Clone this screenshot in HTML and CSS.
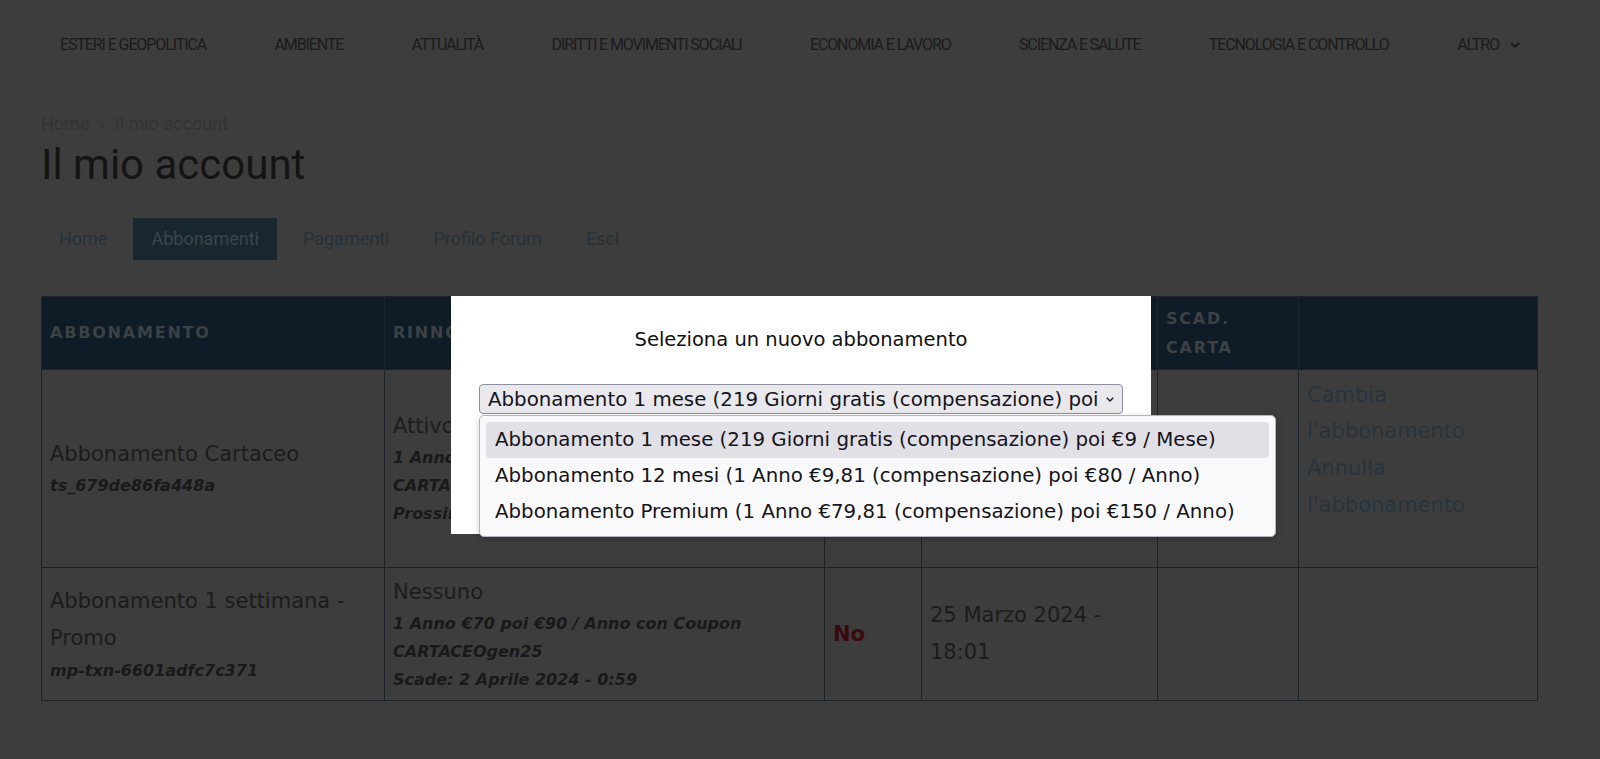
FILE: index.html
```html
<html>
	<head>
		<title>Il mio account</title>
		<link rel="stylesheet" href="styles.css">
	</head>
	<body>
		<header class="site-header">
			<nav class="main-nav">
				<a href="#">Esteri e geopolitica</a>
				<a href="#">Ambiente</a>
				<a href="#">Attualità</a>
				<a href="#">Diritti e movimenti sociali</a>
				<a href="#">Economia e lavoro</a>
				<a href="#">Scienza e salute</a>
				<a href="#">Tecnologia e controllo</a>
				<a href="#" class="more">Altro
					<svg width="10" height="6" viewBox="0 0 10 6"><polyline points="1,1 5,5 9,1" fill="none" stroke="#1b1b1b" stroke-width="1.8"/></svg>
				</a>
			</nav>
		</header>

		<div class="content">
			<div class="breadcrumb"><a href="#">Home</a><span class="sep">›</span>Il mio account</div>
			<h1 class="page-title">Il mio account</h1>

			<ul class="account-tabs">
				<li><a href="#">Home</a></li>
				<li class="active"><a href="#">Abbonamenti</a></li>
				<li><a href="#">Pagamenti</a></li>
				<li><a href="#">Profilo Forum</a></li>
				<li><a href="#">Esci</a></li>
			</ul>

			<table class="subs-table">
				<colgroup>
					<col style="width:343px">
					<col style="width:440px">
					<col style="width:97px">
					<col style="width:236px">
					<col style="width:141px">
					<col style="width:239px">
				</colgroup>
				<thead>
					<tr>
						<th>Abbonamento</th>
						<th>Rinnovo automatico</th>
						<th>Attivo</th>
						<th>Creato</th>
						<th>Scad. carta</th>
						<th></th>
					</tr>
				</thead>
				<tbody>
					<tr>
						<td>
							Abbonamento Cartaceo
							<span class="meta">ts_679de86fa448a</span>
						</td>
						<td>
							Attivo
							<span class="meta">1 Anno €70 poi €90 / Anno con Coupon CARTACEOgen25</span>
							<span class="meta">Prossimo pagamento: 3 Febbraio 2025</span>
						</td>
						<td><span class="yes">Sì</span></td>
						<td>3 Febbraio 2024 - 10:12</td>
						<td></td>
						<td class="actions">
							<div class="actions-list">
								<a href="#">Cambia l'abbonamento</a>
								<a href="#">Annulla l'abbonamento</a>
							</div>
						</td>
					</tr>
					<tr>
						<td>
							Abbonamento 1 settimana - Promo
							<span class="meta">mp-txn-6601adfc7c371</span>
						</td>
						<td>
							Nessuno
							<span class="meta">1 Anno €70 poi €90 / Anno con Coupon CARTACEOgen25</span>
							<span class="meta">Scade: 2 Aprile 2024 - 0:59</span>
						</td>
						<td><span class="no">No</span></td>
						<td>25 Marzo 2024 - 18:01</td>
						<td></td>
						<td></td>
					</tr>
				</tbody>
			</table>
		</div>

		<!-- cambio abbonamento -->
		<div class="modal">
			<h2 class="modal-title">Seleziona un nuovo abbonamento</h2>
			<div class="picker">
				<div class="picker-button">
					<span class="picker-label">Abbonamento 1 mese (219 Giorni gratis (compensazione) poi</span>
					<svg width="8" height="5" viewBox="0 0 8 5"><polyline points="0.8,0.8 4,4 7.2,0.8" fill="none" stroke="#15141a" stroke-width="1.3"/></svg>
				</div>
				<ul class="picker-list">
					<li class="option selected">Abbonamento 1 mese (219 Giorni gratis (compensazione) poi €9 / Mese)</li>
					<li class="option">Abbonamento 12 mesi (1 Anno €9,81 (compensazione) poi €80 / Anno)</li>
					<li class="option">Abbonamento Premium (1 Anno €79,81 (compensazione) poi €150 / Anno)</li>
				</ul>
			</div>
		</div>
	</body>
</html>
```

FILE: styles.css
```css
body {
	margin: 0;
	background: #3d3d3d;
	font-family: Verdana, "DejaVu Sans", sans-serif;
	color: #1c1c1c;
}

a {
	text-decoration: none;
}

.site-header {
	height: 80px;
	box-sizing: border-box;
	padding: 10px 80px 0 60px;
	border-bottom: 1px solid #3a3a3a;
	display: flex;
	align-items: center;
}

.main-nav {
	width: 100%;
	display: flex;
	justify-content: space-between;
	font-family: Roboto, sans-serif;
	font-size: 16px;
	letter-spacing: -1.1px;
	text-transform: uppercase;
}

.main-nav a {
	color: #1b1b1b;
}

.main-nav .more {
	display: inline-flex;
	align-items: center;
	gap: 11px;
}

.content {
	width: 1496px;
	margin-left: 41px;
	padding-top: 30px;
}

.breadcrumb {
	font-family: Roboto, sans-serif;
	font-size: 18px;
	line-height: 27px;
	color: #333;
}

.breadcrumb a {
	color: #333;
}

.breadcrumb .sep {
	margin: 0 10px;
}

.page-title {
	margin: 3px 0 0;
	font-family: Roboto, sans-serif;
	font-weight: 400;
	font-size: 42px;
	line-height: 50px;
	color: #141414;
}

.account-tabs {
	list-style: none;
	margin: 28px 0 0;
	padding: 0;
	display: flex;
	gap: 8px;
}

.account-tabs a {
	display: block;
	padding: 0 18px;
	line-height: 42px;
	font-family: Roboto, sans-serif;
	font-size: 18px;
	color: #25313a;
}

.account-tabs .active a {
	background: #18272f;
	color: #3b444a;
}

.subs-table {
	margin-top: 36px;
	width: 1496px;
	table-layout: fixed;
	border-collapse: collapse;
}

.subs-table th,
.subs-table td {
	border: 1px solid #1b232c;
}

.subs-table th {
	background: #0f1b26;
	color: #3c4145;
	font-size: 16px;
	font-weight: bold;
	letter-spacing: 1.8px;
	text-transform: uppercase;
	text-align: left;
	padding: 8px 8px 6px;
	line-height: 28.8px;
}

.subs-table td {
	padding: 6px 8px;
	font-size: 21px;
	line-height: 1.75;
	vertical-align: middle;
}

.meta {
	display: block;
	font-size: 16px;
	font-weight: bold;
	font-style: italic;
	color: #191919;
}

.no {
	color: #3a0b0e;
	font-weight: bold;
}

.yes {
	color: #0e3a12;
	font-weight: bold;
}

.subs-table td.actions {
	vertical-align: top;
	padding-top: 7px;
}

.actions-list {
	min-height: 184px;
}

.actions-list a {
	display: block;
	color: #27343f;
}

/* modal */
.modal {
	position: absolute;
	left: 451px;
	top: 296px;
	width: 700px;
	height: 238px;
	box-sizing: border-box;
	padding: 29px 28px 0;
	background: #fff;
}

.modal-title {
	margin: 0;
	text-align: center;
	font-size: 19.5px;
	font-weight: normal;
	line-height: 30px;
	color: #111;
}

.picker {
	position: relative;
	margin-top: 29px;
	width: 644px;
}

.picker-button {
	height: 30px;
	box-sizing: border-box;
	border: 1px solid #8f8f9d;
	border-radius: 4px;
	background: #e9e9ed;
	display: flex;
	align-items: center;
	justify-content: space-between;
	padding: 0 8px;
	font-size: 19.8px;
	color: #15141a;
}

.picker-label {
	white-space: nowrap;
}

.picker-list {
	position: absolute;
	left: 0;
	top: 31px;
	width: 797px;
	box-sizing: border-box;
	margin: 0;
	padding: 6px;
	list-style: none;
	background: #f9f9fb;
	border: 1px solid #b5b5bd;
	border-radius: 5px;
	box-shadow: 0 2px 6px rgba(0,0,0,0.2);
}

.option {
	height: 36px;
	line-height: 36px;
	padding: 0 9px;
	font-size: 19.8px;
	color: #15141a;
	white-space: nowrap;
}

.option.selected {
	background: #e0e0e6;
	border-radius: 4px;
}
```
